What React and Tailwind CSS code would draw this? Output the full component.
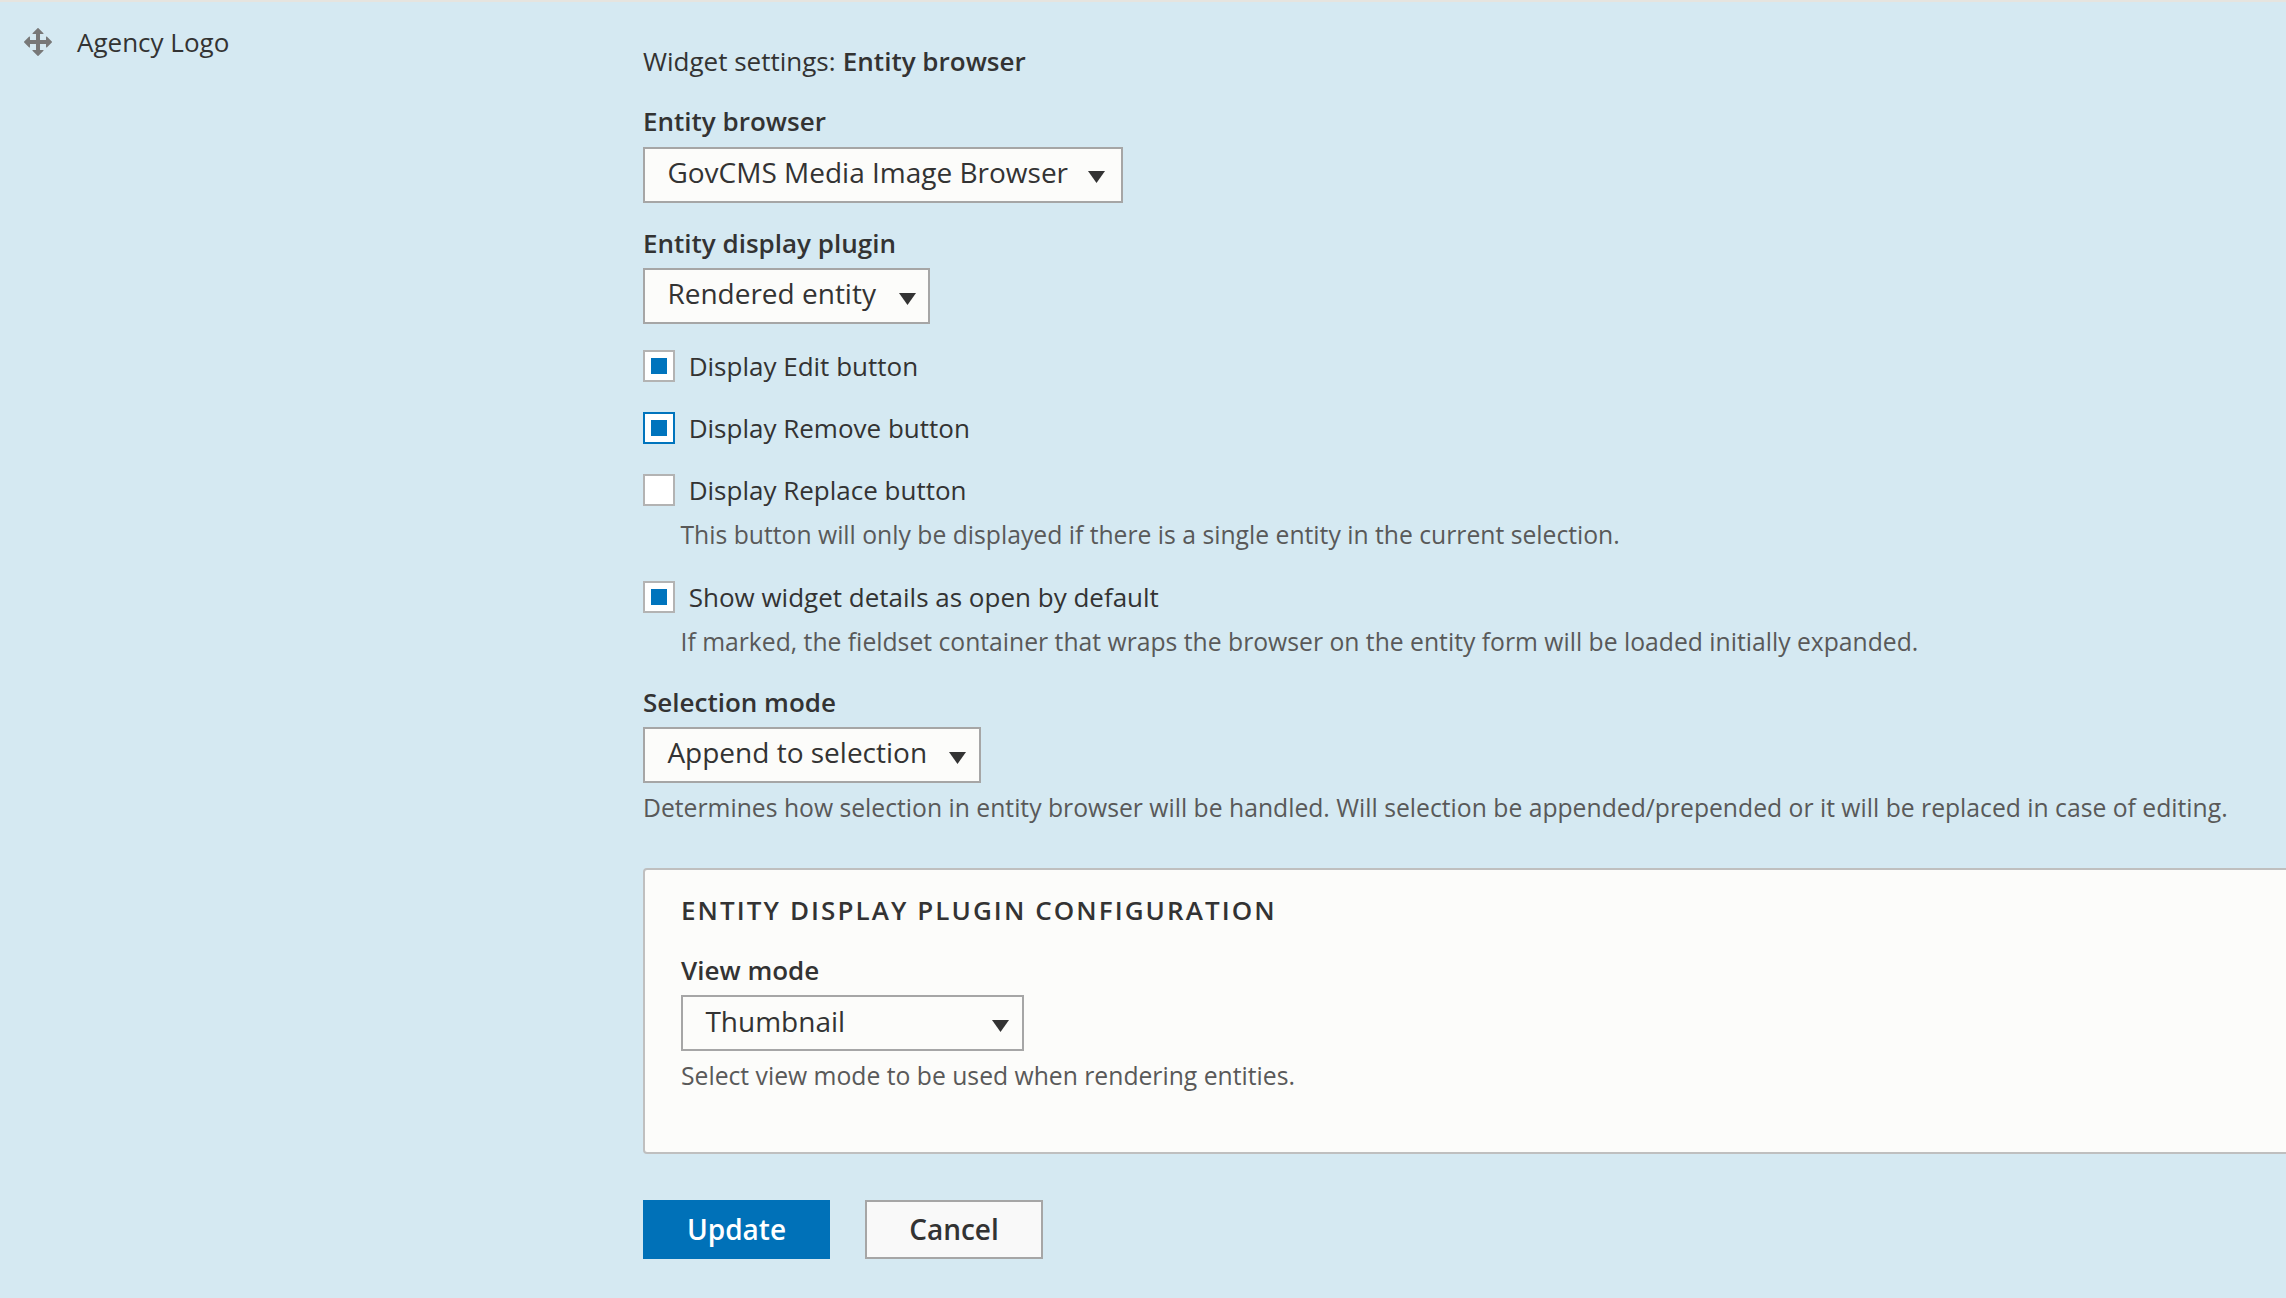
import React from "react";

function MoveIcon() {
  return (
    <svg className="mt-[26px] size-8 shrink-0" viewBox="0 0 16 16" fill="#787878" aria-hidden="true">
      <path d="M14.904 7.753l-2.373-2.372c-.291-.292-.529-.193-.529.22v1.399h-3v-3h1.398c.414 0 .512-.239.221-.53l-2.371-2.372c-.137-.136-.36-.136-.497 0l-2.372 2.372c-.292.292-.193.53.22.53h1.399v3h-3v-1.369c0-.413-.239-.511-.53-.22l-2.372 2.372c-.136.136-.136.359 0 .494l2.372 2.372c.291.292.53.192.53-.219v-1.43h3v3h-1.4c-.413 0-.511.238-.22.529l2.374 2.373c.137.137.36.137.495 0l2.373-2.373c.29-.291.19-.529-.222-.529h-1.398v-3h3v1.4c0 .412.238.511.529.219l2.373-2.371c.137-.137.137-.359 0-.495z" />
    </svg>
  );
}

function Label({ children }) {
  return <div className="leading-10 font-semibold">{children}</div>;
}

function SelectBox({ className, arrow = "mt-[19px]", top = "pt-1", children }) {
  return (
    <button
      type="button"
      className={`flex h-14 items-start justify-between border-2 border-[#a6a6a6] bg-[#fcfcfa] pl-[22.4px] text-left text-[28px] leading-[38px] whitespace-nowrap ${top} ${className}`}
    >
      <span>{children}</span>
      <svg className={`h-3 w-[17px] ${arrow}`} viewBox="0 0 17 12" fill="#333" aria-hidden="true">
        <path d="M0 0h17L8.5 12z" />
      </svg>
    </button>
  );
}

function Description({ className = "", children }) {
  return (
    <div className={`mt-1.5 text-[24.715px] leading-[37px] whitespace-nowrap text-[#595959] ${className}`}>
      {children}
    </div>
  );
}

function Checkbox({ checked, focused, className, children }) {
  return (
    <label className={`flex h-10 items-center gap-[13.7px] leading-10 ${className}`}>
      <span
        className={`flex size-8 items-center justify-center border-2 bg-white ${
          focused ? "border-[#0074bd]" : "border-[#b3b3b3]"
        }`}
      >
        {checked && <span className="size-4 bg-[#0074bd]" />}
      </span>
      {children}
    </label>
  );
}

export default function App() {
  return (
    <div className="flex h-[1298px] w-[2286px] overflow-hidden bg-[#d5e9f2] font-['Open_Sans',sans-serif] text-[26px] text-[#333] shadow-[inset_0_2px_0_#e6e4df]">
      <div className="flex w-[643px] shrink-0 gap-[23px] pl-[22px]">
        <MoveIcon />
        <div className="mt-[22px] leading-10">Agency Logo</div>
      </div>

      <div className="w-[1700px] shrink-0 pt-[41px]">
        <div className="leading-10">
          Widget settings: <span className="ml-[0.5px] font-semibold">Entity browser</span>
        </div>

        <div className="mt-5">
          <Label>Entity browser</Label>
          <SelectBox className="mt-1.5 w-[480px] pr-[16.5px]" arrow="mt-[18px]">GovCMS Media Image Browser</SelectBox>
        </div>

        <div className="mt-5">
          <Label>Entity display plugin</Label>
          <SelectBox className="mt-[5px] w-[287px] pr-[12.5px]">Rendered entity</SelectBox>
        </div>

        <Checkbox checked className="mt-[22px]">Display Edit button</Checkbox>
        <Checkbox checked focused className="mt-[22px]">Display Remove button</Checkbox>
        <Checkbox className="mt-[22px]">Display Replace button</Checkbox>
        <Description className="pl-[37.5px]">
          This button will only be displayed if there is a single entity in the current selection.
        </Description>
        <Checkbox checked className="mt-6">Show widget details as open by default</Checkbox>
        <Description className="pl-[37.5px]">
          If marked, the fieldset container that wraps the browser on the entity form will be loaded initially expanded.
        </Description>

        <div className="mt-[22px]">
          <Label>Selection mode</Label>
          <SelectBox className="mt-[5px] w-[338px] pr-[13.5px]" arrow="mt-[18.5px]">Append to selection</SelectBox>
          <Description>
            Determines how selection in entity browser will be handled. Will selection be appended/prepended or it will
            be replaced in case of editing.
          </Description>
        </div>

        <section className="mt-[42px] h-[286px] rounded border-2 border-[#bfbfbf] bg-[#fcfcfa] px-9 pt-5">
          <h2 className="leading-10 font-semibold tracking-[0.08em] uppercase">Entity display plugin configuration</h2>
          <div className="mt-5">
            <Label>View mode</Label>
            <SelectBox className="mt-[5px] w-[343px] pr-[13.5px]" top="pt-[5px]" arrow="mt-[18px]">Thumbnail</SelectBox>
            <Description>Select view mode to be used when rendering entities.</Description>
          </div>
        </section>

        <div className="mt-[46px] flex gap-[35px] text-[28px] leading-[38px] font-semibold">
          <button type="button" className="h-[59px] w-[187px] bg-[#0071b8] pb-px text-white">
            Update
          </button>
          <button type="button" className="h-[59px] w-[178px] border-2 border-[#a6a6a6] bg-[#f9f9f9] pb-px">
            Cancel
          </button>
        </div>
      </div>
    </div>
  );
}
